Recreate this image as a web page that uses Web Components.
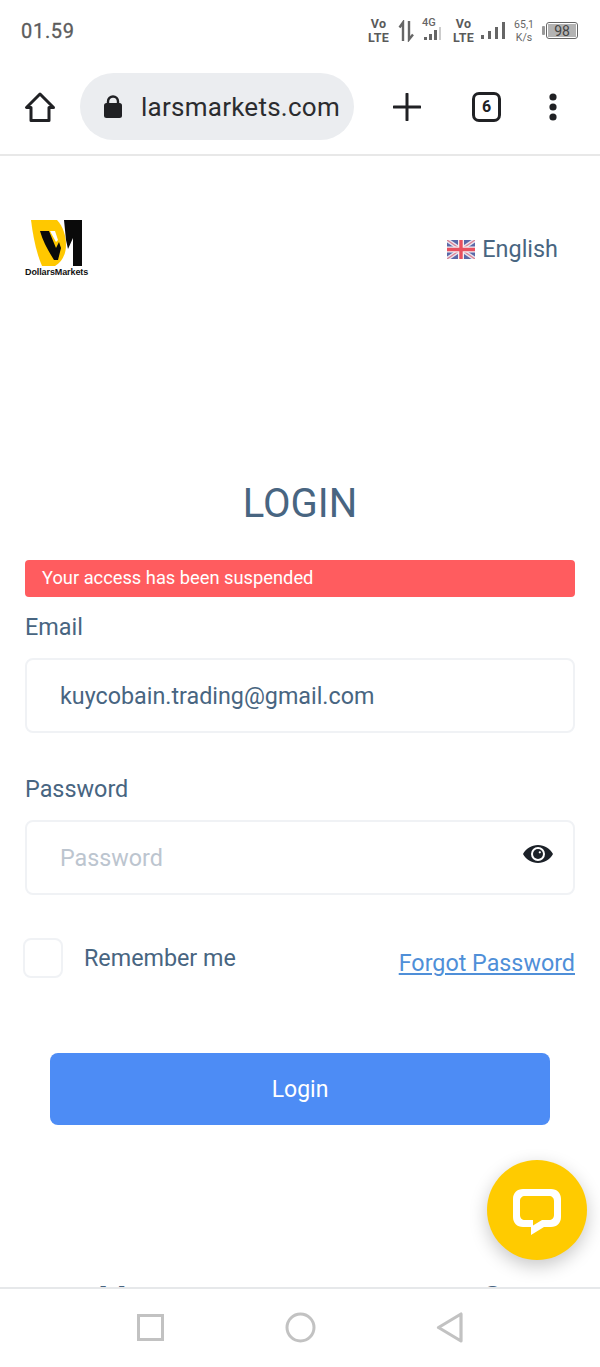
<!DOCTYPE html>
<html>
<head>
<meta charset="utf-8">
<title>Login</title>
<style>
  html, body { margin: 0; padding: 0; background: #fff; }
  body { width: 600px; height: 1367px; overflow: hidden; font-family: Roboto, "Liberation Sans", sans-serif; display: flex; flex-direction: column; position: relative; }
</style>
</head>
<body>
  <status-bar></status-bar>
  <browser-toolbar url="larsmarkets.com" tabs="6"></browser-toolbar>
  <login-page></login-page>
  <chat-button></chat-button>
  <nav-bar></nav-bar>

<script>
class StatusBar extends HTMLElement {
  constructor() {
    super();
    this.attachShadow({ mode: 'open' });
    this.shadowRoot.innerHTML = `
      <style>
        :host { display: flex; flex: none; height: 60px; align-items: center; justify-content: space-between; padding: 1px 22px 0 21px; box-sizing: border-box; color: #5f6368; }
        .time { font-size: 20px; font-weight: 400; letter-spacing: 0.7px; color: #5c5c5c; -webkit-text-stroke: 0.3px #5c5c5c; }
        .icons { display: flex; align-items: center; height: 30px; }
        .net { font-size: 12.5px; font-weight: 700; line-height: 14px; text-align: center; width: 21px; color: #5a5a5a; letter-spacing: 0.2px; }
        .arrows { margin-left: 9px; }
        .g4 { position: relative; width: 27px; height: 26px; margin-left: 4px; }
        .g4 span { position: absolute; left: 2px; top: -1px; font-size: 11px; font-weight: 500; color: #666; line-height: 11px; }
        .g4 svg { position: absolute; left: 4px; top: 9px; }
        .net2 { margin-left: 6px; }
        .bars { margin-left: 7px; margin-top: 1px; }
        .speed { font-size: 10.5px; line-height: 13px; text-align: center; width: 20px; color: #666; margin: 0 8px 0 8px; }
        .bat { display: flex; align-items: center; }
        .case { width: 28px; height: 13px; border: 1px solid #666; border-radius: 3px; margin-left: 1px; padding: 1px; display: flex; }
        .fill { flex: 1; background: #b3b3b3; font-size: 14px; line-height: 14px; text-align: center; color: #444; }
      </style>
      <div class="time">01.59</div>
      <div class="icons">
        <div class="net">Vo<br>LTE</div>
        <svg class="arrows" width="18" height="22" viewBox="0 0 18 22"><path d="M5 21V3M1.500 7.500L5 2.500V8" fill="none" stroke="#666" stroke-width="2.400"/><path d="M11 1V19M15 14.500L11 19.500V14" fill="none" stroke="#666" stroke-width="2.400"/></svg>
        <div class="g4"><span>4G</span><svg width="23" height="15"><rect x="0" y="10" width="3" height="3" fill="#666"/><rect x="5" y="7" width="3" height="6" fill="#666"/><rect x="10" y="3" width="3" height="10" fill="#666"/><rect x="15" y="0" width="2" height="13" fill="#ccc"/></svg></div>
        <div class="net net2">Vo<br>LTE</div>
        <svg class="bars" width="25" height="18" viewBox="0 0 25 18"><rect x="0" y="13" width="3" height="4" fill="#666"/><rect x="7" y="9" width="3" height="8" fill="#666"/><rect x="14" y="5" width="3" height="12" fill="#666"/><rect x="21" y="0" width="3" height="17" fill="#666"/></svg>
        <div class="speed">65,1<br>K/s</div>
        <div class="bat">
          <svg width="3" height="9"><rect width="3" height="9" rx="1" fill="#999"/></svg>
          <div class="case"><div class="fill">98</div></div>
        </div>
      </div>`;
  }
}

class BrowserToolbar extends HTMLElement {
  connectedCallback() {
    const url = this.getAttribute('url');
    const tabs = this.getAttribute('tabs');
    this.attachShadow({ mode: 'open' });
    this.shadowRoot.innerHTML = `
      <style>
        :host { display: flex; flex: none; align-items: center; height: 96px; box-sizing: border-box; border-bottom: 2px solid #e8e8e8; padding: 0 0 1px 0; color: #202124; }
        .home { margin-left: 24px; width: 32px; height: 32px; flex: none; }
        .pill { margin-left: 24px; width: 274px; height: 67px; flex: none; border-radius: 34px; background: #ebedf0; display: flex; align-items: center; box-sizing: border-box; padding-left: 24px; }
        .pill span { font-size: 26px; margin-left: 19px; white-space: nowrap; color: #2b2c2f; letter-spacing: 0.25px; }
        .plus { margin-left: 39px; flex: none; }
        .tab { margin-left: 51px; flex: none; width: 23px; height: 24px; border: 3px solid #202124; border-radius: 7px; font-size: 16px; font-weight: 700; display: flex; align-items: center; justify-content: center; }
        .more { margin-left: 48px; flex: none; }
      </style>
      <svg class="home" viewBox="0 0 32 32"><path d="M16 3L2.500 16.500H7V29.500H25V16.500H29.500Z" fill="none" stroke="#202124" stroke-width="3" stroke-linejoin="round"/></svg>
      <div class="pill">
        <svg width="18" height="23" viewBox="0 0 18 23"><path d="M4 9V6.500a5 5 0 0 1 10 0V9" fill="none" stroke="#202124" stroke-width="2.400"/><rect x="0" y="8" width="18" height="15" rx="2.500" fill="#202124"/></svg>
        <span>${url}</span>
      </div>
      <svg class="plus" width="28" height="28" viewBox="0 0 28 28"><path d="M14 1V27M1 14H27" stroke="#202124" stroke-width="3" stroke-linecap="round"/></svg>
      <div class="tab">${tabs}</div>
      <svg class="more" width="8" height="28" viewBox="0 0 8 28"><circle cx="4" cy="4" r="3.600" fill="#202124"/><circle cx="4" cy="14" r="3.600" fill="#202124"/><circle cx="4" cy="24" r="3.600" fill="#202124"/></svg>`;
  }
}

class BrandLogo extends HTMLElement {
  constructor() {
    super();
    this.attachShadow({ mode: 'open' });
    this.shadowRoot.innerHTML = `
      <style>
        :host { display: flex; flex-direction: column; width: 63px; height: 60px; }
        svg { display: block; }
        span { font-family: "Liberation Sans", sans-serif; font-size: 9px; font-weight: 700; line-height: 10px; color: #111; white-space: nowrap; letter-spacing: -0.1px; }
      </style>
      <svg width="63" height="49" viewBox="0 0 63 49">
        <path d="M6 2H32C38 8 41 18 41 27C41 36 37 44 30 48H17C11 34 8 18 6 2Z" fill="#ffc800"/>
        <path d="M15 13H24L31 30L34 24L36 30L33 42H29C24 34 18 24 15 13Z" fill="#0a0a0a"/>
        <path d="M25 13H30L33 22L31 24Z" fill="#fff"/>
        <path d="M39 2H57V48H48V20L43 31L41 22Z" fill="#0a0a0a"/>
      </svg>
      <span>DollarsMarkets</span>`;
  }
}

class LangPicker extends HTMLElement {
  constructor() {
    super();
    this.attachShadow({ mode: 'open' });
    this.shadowRoot.innerHTML = `
      <style>
        :host { display: flex; align-items: center; gap: 7px; font-size: 23.4px; color: #486581; }
      </style>
      <svg width="28" height="19" viewBox="0 0 28 19">
        <rect width="28" height="19" fill="#5a68a8"/>
        <path d="M0 0L28 19M28 0L0 19" stroke="#e8e4ee" stroke-width="4"/>
        <path d="M0 0L28 19M28 0L0 19" stroke="#dc7f92" stroke-width="1.200"/>
        <path d="M14 0V19M0 9.500H28" stroke="#f4eef2" stroke-width="6"/>
        <path d="M14 0V19M0 9.500H28" stroke="#e8505f" stroke-width="3.400"/>
      </svg>
      <slot></slot>`;
  }
}

class TextField extends HTMLElement {
  connectedCallback() {
    const label = this.getAttribute('label');
    const placeholder = this.hasAttribute('placeholder');
    this.attachShadow({ mode: 'open' });
    this.shadowRoot.innerHTML = `
      <style>
        :host { display: block; color: #486581; }
        label { display: block; font-size: 23.4px; line-height: 27px; margin-bottom: 17px; }
        .box { height: 75px; box-sizing: border-box; border: 2px solid #f0f2f5; border-radius: 8px; display: flex; align-items: center; justify-content: space-between; padding: 0 20px 0 33px; font-size: 23.3px; color: ${placeholder ? '#bcc5cf' : '#486581'}; }
      </style>
      <label>${label}</label>
      <div class="box"><span><slot></slot></span><slot name="end"></slot></div>`;
  }
}

class LoginPage extends HTMLElement {
  constructor() {
    super();
    this.attachShadow({ mode: 'open' });
    this.shadowRoot.innerHTML = `
      <style>
        :host { display: block; flex: none; height: 1131px; overflow: hidden; box-sizing: border-box; padding: 62px 25px 0; color: #486581; }
        header { display: flex; justify-content: space-between; align-items: flex-start; padding-right: 17px; }
        lang-picker { margin-top: 17px; }
        h1 { margin: 202px 0 0; text-align: center; font-size: 40px; line-height: 48px; font-weight: 400; }
        .alert { margin-top: 32px; height: 37px; border-radius: 4px; background: #ff5c5f; color: #fff; font-size: 18.3px; line-height: 36px; padding-left: 17px; }
        text-field { margin-top: 17px; }
        text-field + text-field { margin-top: 43px; }
        .row { display: flex; justify-content: space-between; margin-top: 43px; margin-left: -2px; }
        .remember { display: flex; align-items: center; gap: 21px; font-size: 23.3px; }
        .check { width: 40px; height: 40px; box-sizing: border-box; border: 2px solid #f0f2f5; border-radius: 8px; }
        a { margin-top: 12px; font-size: 23.3px; line-height: 27px; color: #4f8fd8; text-decoration: underline; }
        button { display: block; margin: 75px 25px 0; width: 500px; height: 72px; border: 0; border-radius: 8px; background: #4d8cf5; color: #fff; font: 400 23px Roboto, sans-serif; }
        .below { margin: 154px -10px 0; text-align: center; font-size: 42px; line-height: 46px; font-weight: 500; white-space: nowrap; }
      </style>
      <header>
        <brand-logo></brand-logo>
        <lang-picker>English</lang-picker>
      </header>
      <h1>LOGIN</h1>
      <div class="alert">Your access has been suspended</div>
      <text-field label="Email">kuycobain.trading@gmail.com</text-field>
      <text-field label="Password" placeholder>Password
        <svg slot="end" width="30" height="20" viewBox="0 0 30 20" style="margin-bottom:7px"><path fill-rule="evenodd" d="M15 1C8.500 1 3 4.500 0 10c3 5.500 8.500 9 15 9s12-3.500 15-9C27 4.500 21.500 1 15 1zM15 3a7 7 0 1 1 0 14a7 7 0 0 1 0-14z" fill="#1c2128"/><circle cx="15" cy="10" r="5" fill="#1c2128"/><circle cx="16.800" cy="8.300" r="1.100" fill="#fff"/></svg>
      </text-field>
      <div class="row">
        <div class="remember"><div class="check"></div><span>Remember me</span></div>
        <a>Forgot Password</a>
      </div>
      <button>Login</button>
      <div class="below">Have not an account?</div>`;
  }
}

class ChatButton extends HTMLElement {
  constructor() {
    super();
    this.attachShadow({ mode: 'open' });
    this.shadowRoot.innerHTML = `
      <style>
        :host { position: absolute; left: 487px; top: 1160px; width: 100px; height: 100px; border-radius: 50%; background: #ffcb00; box-shadow: 0 6px 18px rgba(0,0,0,.22); display: flex; align-items: center; justify-content: center; }
      </style>
      <svg width="48" height="46" viewBox="0 0 48 46" style="margin-top:4px"><path fill-rule="evenodd" d="M10 0H38C44 0 48 4 48 10V28C48 34 44 38 38 38H31L18 46V38H10C4 38 0 34 0 28V10C0 4 4 0 10 0ZM12 7C9 7 7 9 7 12V26C7 29 9 31 12 31H20V36.500L29 31H36C39 31 41 29 41 26V12C41 9 39 7 36 7Z" fill="#fff"/></svg>`;
  }
}

class NavBar extends HTMLElement {
  constructor() {
    super();
    this.attachShadow({ mode: 'open' });
    this.shadowRoot.innerHTML = `
      <style>
        :host { display: flex; flex: none; position: relative; height: 80px; box-sizing: border-box; border-top: 2px solid #e6e8ea; background: #fff; justify-content: center; align-items: center; gap: 119px; padding: 0 0 2px 0; }
      </style>
      <svg width="31" height="31" viewBox="0 0 31 31"><rect x="3.500" y="3.500" width="24" height="24" fill="none" stroke="#c2c2c2" stroke-width="3"/></svg>
      <svg width="31" height="31" viewBox="0 0 31 31"><circle cx="15.500" cy="15.500" r="13.500" fill="none" stroke="#c2c2c2" stroke-width="3"/></svg>
      <svg width="31" height="31" viewBox="0 0 31 31"><path d="M26 2V29L3.500 15.500Z" fill="none" stroke="#c2c2c2" stroke-width="3.200" stroke-linejoin="round"/></svg>`;
  }
}

customElements.define('status-bar', StatusBar);
customElements.define('browser-toolbar', BrowserToolbar);
customElements.define('brand-logo', BrandLogo);
customElements.define('lang-picker', LangPicker);
customElements.define('text-field', TextField);
customElements.define('login-page', LoginPage);
customElements.define('chat-button', ChatButton);
customElements.define('nav-bar', NavBar);
</script>
</body>
</html>
